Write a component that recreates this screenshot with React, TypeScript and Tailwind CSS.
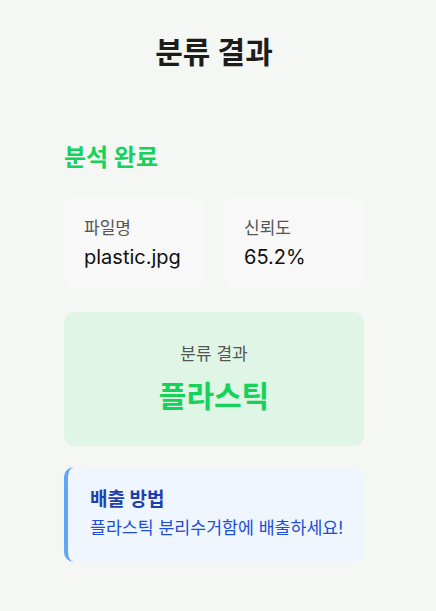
export default function App() {
  return (
    <div
      className="min-h-[611px] w-full bg-[#f5f7f5] text-[#1a1a1a]"
      style={{ fontFamily: 'Inter, "Noto Sans CJK KR", sans-serif' }}
    >
      <div className="ml-[64px] w-[300px] pt-[30px]">
        <h1 className="text-center text-[30px] font-bold leading-[44px] text-[#1c1c1c]">분류 결과</h1>

        <h2 className="mt-[68px] text-[24px] font-bold leading-[32px] text-[#16d15a]">분석 완료</h2>

        <div className="mt-[23px] grid grid-cols-2 gap-5">
          <div className="rounded-[10px] bg-[#f7f8f7] px-5 pt-[20px] pb-[19px]">
            <div className="text-[17px] leading-[22px] text-[#555]">파일명</div>
            <div className="mt-[4px] text-[20px] leading-[28px] text-[#111]">plastic.jpg</div>
          </div>
          <div className="rounded-[10px] bg-[#f7f8f7] px-5 pt-[20px] pb-[19px]">
            <div className="text-[17px] leading-[22px] text-[#555]">신뢰도</div>
            <div className="mt-[4px] text-[20px] leading-[28px] text-[#111]">65.2%</div>
          </div>
        </div>

        <div className="mt-[22px] flex h-[134px] flex-col items-center rounded-[10px] bg-[#dff5e5] pt-[30px]">
          <div className="text-[17px] leading-[24px] text-[#555]">분류 결과</div>
          <div className="mt-[10px] text-[30px] font-bold leading-[40px] text-[#16d15a]">플라스틱</div>
        </div>

        <div className="mt-[21px] h-[95px] rounded-[10px] border-l-4 border-[#60a5fa] bg-[#eff6ff] pl-[22px] pt-[20px]">
          <div className="text-[19px] font-bold leading-[26px] text-[#1e40af]">배출 방법</div>
          <div className="mt-[3px] text-[17.3px] leading-[24px] text-[#1d4ed8]">플라스틱 분리수거함에 배출하세요!</div>
        </div>
      </div>
    </div>
  );
}
